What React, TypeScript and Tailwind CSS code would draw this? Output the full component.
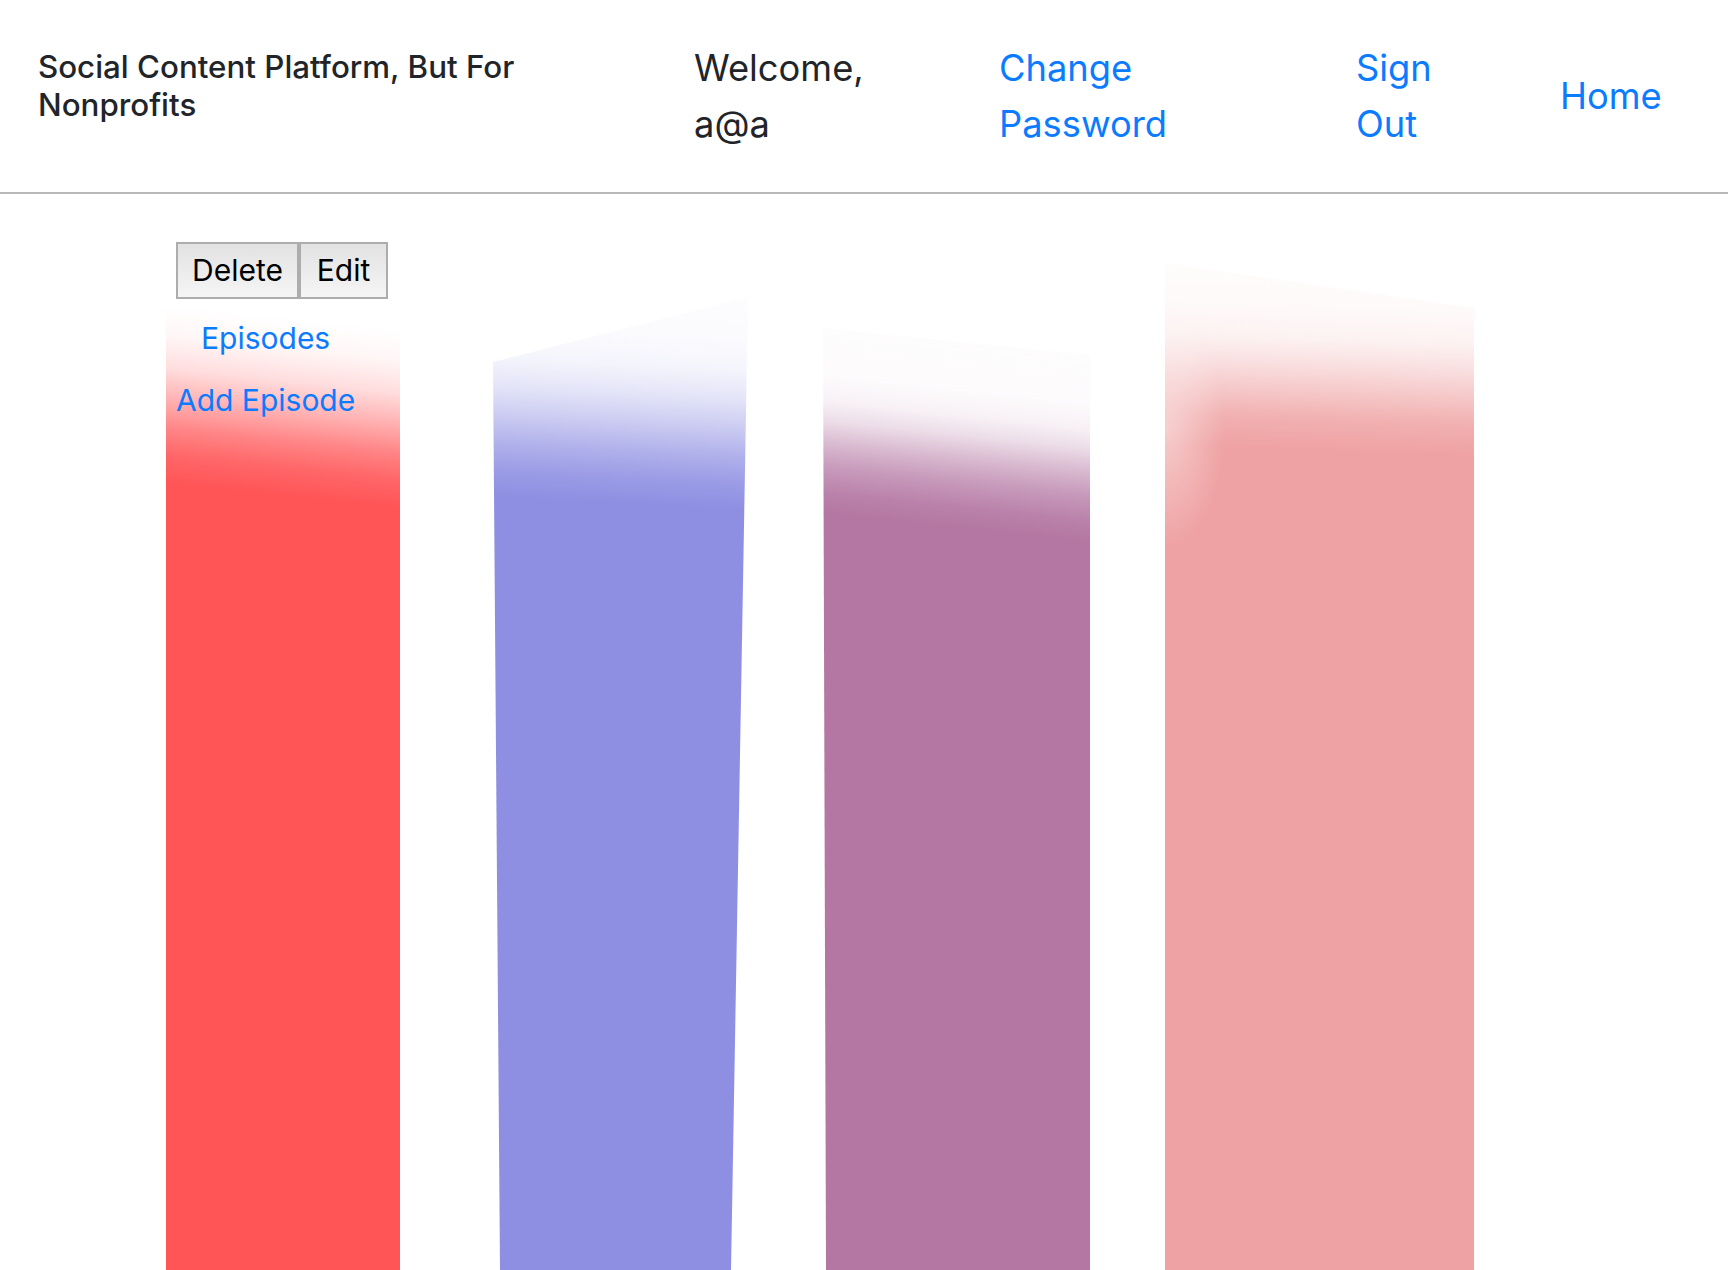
const linkCls = "text-[#0b7bff] hover:underline cursor-pointer";

const Header = () => {
  return (
    <header className="grid h-[194px] grid-cols-[656px_305px_357px_204px_1fr] items-center border-b-2 border-[#b9b9b9] pl-[38px]">
      <h5 className="mb-[20px] max-w-[520px] text-[31.3px] leading-[38.4px] font-medium text-[#212529]">
        Social Content Platform, But For Nonprofits
      </h5>
      <span className="w-min text-[36.3px] leading-[56px] text-[#212529]">Welcome, a@a</span>
      <a className={`w-min text-[36.3px] leading-[56px] ${linkCls}`}>Change Password</a>
      <a className={`w-min text-[36.3px] leading-[56px] ${linkCls}`}>Sign Out</a>
      <a className={`w-min text-[36.3px] leading-[56px] ${linkCls}`}>Home</a>
    </header>
  );
};

const ShowCard = () => {
  return (
    <div className="mt-[20px] w-[234px] bg-[linear-gradient(186deg,rgba(255,85,87,0)_115px,rgba(255,85,87,0.05)_145px,rgba(255,85,87,0.2)_178px,rgba(255,85,87,0.45)_208px,rgba(255,85,87,0.72)_238px,rgba(255,85,87,0.9)_265px,#ff5557_292px)] pt-[28px] pl-[10px]">
      <div className="flex">
        <button className="flex h-[57px] w-[123px] items-center justify-center border-2 border-[#adadad] bg-[linear-gradient(180deg,#e2e2e2,#f5f5f5)] text-[30px] text-black">
          Delete
        </button>
        <button className="flex h-[57px] w-[89px] items-center justify-center border-2 border-[#adadad] bg-[linear-gradient(180deg,#e2e2e2,#f5f5f5)] text-[30px] text-black">
          Edit
        </button>
      </div>
      <div className="flex w-fit flex-col items-center">
        <a className={`mt-[17px] text-[30px] leading-[45px] ${linkCls}`}>Episodes</a>
        <a className={`mt-[17px] text-[30px] leading-[45px] ${linkCls}`}>Add Episode</a>
      </div>
    </div>
  );
};

const Showcase = () => {
  return (
    <main className="flex h-[1076px] items-stretch pl-[166px]">
      <ShowCard />
      {/* blue */}
      <div className="mt-[103px] ml-[93px] w-[255px] bg-[linear-gradient(183deg,rgba(142,143,226,0.02)_0px,rgba(142,143,226,0.04)_45px,rgba(142,143,226,0.1)_75px,rgba(142,143,226,0.24)_102px,rgba(142,143,226,0.45)_130px,rgba(142,143,226,0.7)_160px,rgba(142,143,226,0.88)_185px,#8e8fe2_212px)] [clip-path:polygon(0_65px,100%_0,238px_100%,7px_100%)]" />
      {/* purple */}
      <div className="mt-[134px] ml-[75px] w-[267px] bg-[linear-gradient(186deg,rgba(180,119,163,0.01)_0px,rgba(180,119,163,0.03)_75px,rgba(180,119,163,0.1)_100px,rgba(180,119,163,0.25)_120px,rgba(180,119,163,0.5)_142px,rgba(180,119,163,0.75)_167px,rgba(180,119,163,0.92)_192px,#b477a3_212px)] [clip-path:polygon(0_0,100%_27px,100%_100%,3px_100%)]" />
      {/* pink */}
      <div className="mt-[69px] ml-[75px] w-[309px] [background-image:radial-gradient(ellipse_60px_120px_at_0_165px,rgba(255,255,255,0.45),rgba(255,255,255,0)),linear-gradient(182deg,rgba(239,162,163,0.03)_0px,rgba(239,162,163,0.06)_50px,rgba(239,162,163,0.15)_82px,rgba(239,162,163,0.35)_108px,rgba(239,162,163,0.6)_135px,rgba(239,162,163,0.85)_162px,#efa2a3_192px)] [clip-path:polygon(0_0,100%_45px,100%_100%,0_100%)]" />
    </main>
  );
};

export default function App() {
  return (
    <div className="h-[1270px] overflow-hidden bg-white font-['Inter',sans-serif]">
      <Header />
      <Showcase />
    </div>
  );
}
